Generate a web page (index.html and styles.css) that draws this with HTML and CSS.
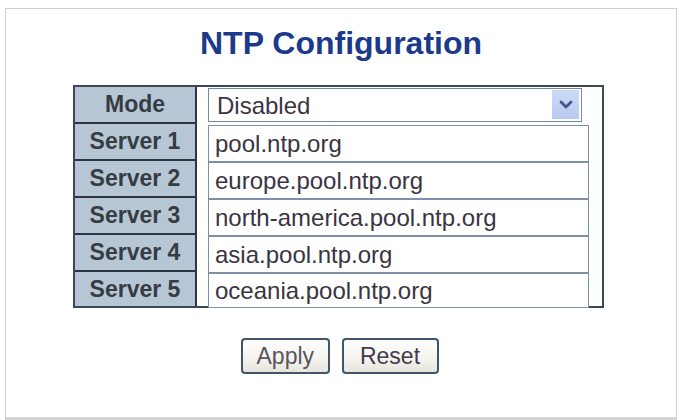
FILE: index.html
```html
<!DOCTYPE html>
<html>
<head>
<meta charset="utf-8">
<title>NTP Configuration</title>
<link rel="stylesheet" href="styles.css">
</head>
<body>
<div class="page">
  <div class="panel">
    <h1 class="title">NTP Configuration</h1>
    <div class="cfg">
      <div class="label">Mode</div>
      <div class="value">
        <div class="select-wrap">
          <select class="select"><option>Disabled</option><option>Enabled</option></select>
          <span class="select-arrow"><svg width="14" height="9" viewBox="0 0 14 9"><path d="M2 2 L7 7 L12 2" fill="none" stroke="#41568a" stroke-width="2.8" stroke-linecap="round" stroke-linejoin="round"/></svg></span>
        </div>
      </div>
      <div class="label">Server 1</div>
      <div class="value"><input class="field" type="text" value="pool.ntp.org"></div>
      <div class="label">Server 2</div>
      <div class="value"><input class="field" type="text" value="europe.pool.ntp.org"></div>
      <div class="label">Server 3</div>
      <div class="value"><input class="field" type="text" value="north-america.pool.ntp.org"></div>
      <div class="label">Server 4</div>
      <div class="value"><input class="field" type="text" value="asia.pool.ntp.org"></div>
      <div class="label last">Server 5</div>
      <div class="value"><input class="field field-last" type="text" value="oceania.pool.ntp.org"></div>
    </div>
    <div class="buttons">
      <button class="btn btn-apply" type="button">Apply</button>
      <button class="btn btn-reset" type="button">Reset</button>
    </div>
  </div>
</div>
</body>
</html>
```

FILE: styles.css
```css
html, body {
  margin: 0;
  padding: 0;
  background: #ffffff;
}

.page {
  padding: 8px 0 0 5px;
  font-family: "Liberation Sans", Arial, sans-serif;
}

.panel {
  box-sizing: border-box;
  width: 672px;
  height: 412px;
  border: 1px solid #cfcfcf;
  border-bottom: 3px solid #d6d6d6;
  background: #ffffff;
  padding-top: 16px;
}

.title {
  margin: 0;
  text-align: center;
  font-size: 32px;
  line-height: 36px;
  font-weight: bold;
  color: #1c3a8a;
}

.cfg {
  box-sizing: border-box;
  display: grid;
  grid-template-columns: 122px 1fr;
  grid-template-rows: 37px 37px 37px 37px 37px 34px;
  width: 531px;
  margin: 24px 0 0 67px;
  border: 2px solid #3a4754;
  background: #ffffff;
}

.label {
  box-sizing: border-box;
  background: #b7c6d5;
  border-right: 2px solid #2d3640;
  border-bottom: 2px solid #2d3640;
  text-align: center;
  font-size: 23px;
  font-weight: bold;
  color: #353c43;
  line-height: 35px;
}

.label.last {
  border-bottom: none;
  line-height: 34px;
}

.value {
  padding-left: 11px;
  min-width: 0;
}

.select-wrap {
  position: relative;
  width: 374px;
  height: 34px;
  margin-top: 1px;
}

.select {
  -webkit-appearance: none;
  appearance: none;
  box-sizing: border-box;
  width: 374px;
  height: 34px;
  border: 1px solid #7489a0;
  border-radius: 0;
  background: #ffffff;
  padding: 0 0 0 8px;
  margin: 0;
  font-family: "Liberation Sans", Arial, sans-serif;
  font-size: 24px;
  color: #3b3443;
}

.select-arrow {
  position: absolute;
  right: 3px;
  top: 2px;
  width: 27px;
  height: 29px;
  background: linear-gradient(#ccdaf7, #b8caef);
  display: flex;
  align-items: center;
  justify-content: center;
  pointer-events: none;
}

.field {
  box-sizing: border-box;
  display: block;
  width: 381px;
  height: 37px;
  margin: 1px 0 0 0;
  border: 1px solid #7d91a6;
  border-radius: 0;
  padding: 0 0 0 6px;
  background: #ffffff;
  font-family: "Liberation Sans", Arial, sans-serif;
  font-size: 24px;
  color: #3b3443;
  outline: none;
}

.field-last {
  height: 35px;
}

.buttons {
  display: flex;
  justify-content: center;
  gap: 12px;
  margin-top: 30px;
  padding-right: 3px;
}

.btn {
  box-sizing: border-box;
  height: 36px;
  padding: 0 14px;
  border: 2px solid #42566b;
  border-radius: 4px;
  background: linear-gradient(#ffffff, #f4f3ee 60%, #e6e4dc);
  font-family: "Liberation Sans", Arial, sans-serif;
  font-size: 23px;
  line-height: 30px;
}

.btn-apply {
  width: 89px;
  color: #5a5360;
}

.btn-reset {
  width: 97px;
  color: #45394f;
}
```
